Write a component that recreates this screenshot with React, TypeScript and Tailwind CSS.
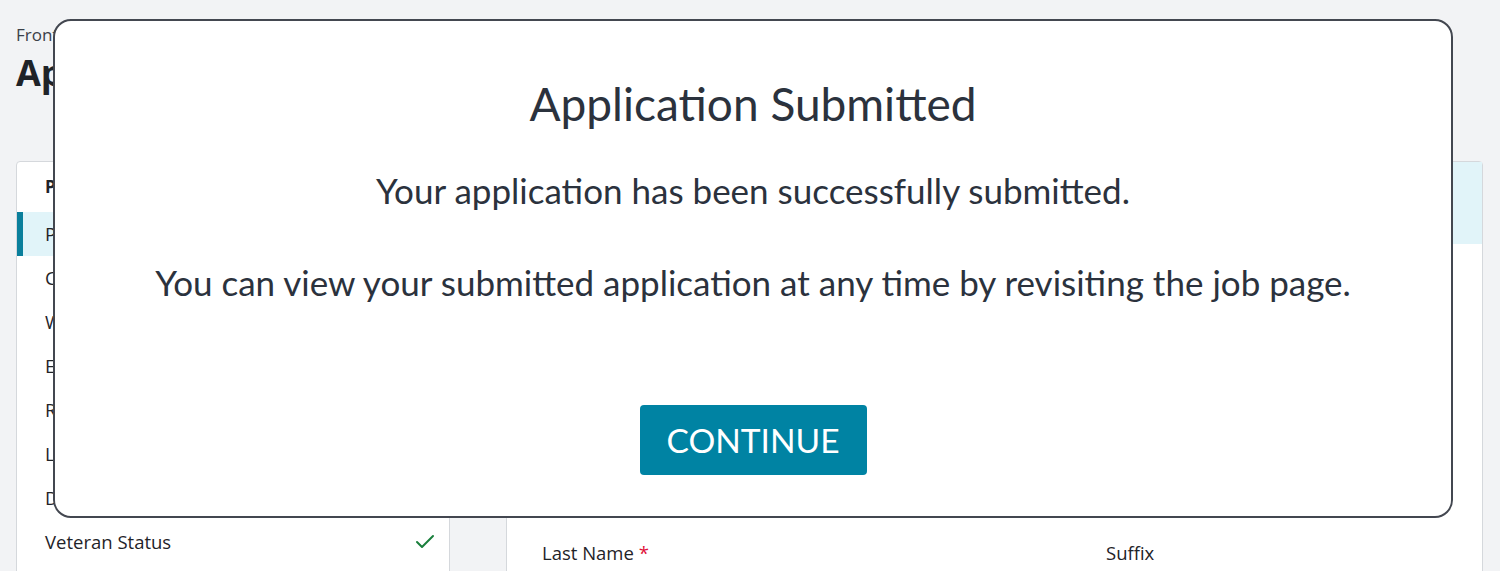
import { Check } from "lucide-react";

const steps = [
    "Personal Information",
    "Contact Information",
    "Work Experience",
    "Education",
    "References",
    "Licenses",
    "Documents",
    "Veteran Status",
];

const SideNav = () => (
    <div className="w-[434px] shrink-0 rounded-t-sm border border-[#d5d8dc] bg-white pb-[40px] pt-[12px]">
        <div className="px-[28px] pb-[12px] text-[17px] font-bold leading-[26px] text-[#1f2328]">Profile</div>
        {steps.map((step, i) => (
            <div
                key={step}
                className={
                    i === 0
                        ? "flex h-[44px] items-center justify-between border-l-[6px] border-[#0a7f9c] bg-[#e1f4f9] pl-[22px] pr-[12px] text-[18.5px] text-[#1f2328]"
                        : "flex h-[44px] items-center justify-between pl-[28px] pr-[12px] text-[18.5px] text-[#1f2328]"
                }
            >
                <span>{step}</span>
                {i === steps.length - 1 && <Check className="h-6 w-6 text-[#1a7f3c]" strokeWidth={2} />}
            </div>
        ))}
    </div>
);

const MainPanel = () => (
    <div className="flex-1 rounded-t-sm border border-[#d5d8dc] bg-white pb-[40px]">
        <div className="h-[82px] bg-[#e1f4f9]" />
        <div className="h-[296px]" />
        <div className="flex px-[35px] text-[18.5px] leading-[26px] text-[#1f2328]">
            <div className="w-[564px]">
                Last Name <span className="text-[#e0103a]">*</span>
            </div>
            <div>Suffix</div>
        </div>
    </div>
);

const SubmittedModal = () => (
    <div className="absolute left-[53px] top-[19px] flex h-[499px] w-[1400px] flex-col items-center rounded-[18px] border-2 border-[#434750] bg-white font-['Lato',sans-serif] text-[#2b323d]">
        <h2 className="mt-[53px] text-[46px] leading-[60px]">Application Submitted</h2>
        <p className="mt-[34px] text-[35px] leading-[44px]">Your application has been successfully submitted.</p>
        <p className="mt-[48px] text-[35px] leading-[44px]">
            You can view your submitted application at any time by revisiting the job page.
        </p>
        <button className="mt-[101px] h-[70px] w-[227px] rounded-[4px] bg-[#0083a3] text-[33.5px] text-white">
            CONTINUE
        </button>
    </div>
);

export default function App() {
    return (
        <div className="relative h-[571px] overflow-hidden bg-[#f2f3f5] font-['Open_Sans',sans-serif]">
            <div className="px-[16px] pt-[23px]">
                <div className="text-[17px] leading-[24px] text-[#3b4049]">Front Desk Associate</div>
                <h1 className="mt-[4px] text-[36px] font-bold leading-[44px] text-[#1f2328]">Application</h1>
            </div>
            <div className="mt-[66px] flex gap-[56px] pl-[16px] pr-[17px]">
                <SideNav />
                <MainPanel />
            </div>
            <SubmittedModal />
        </div>
    );
}
